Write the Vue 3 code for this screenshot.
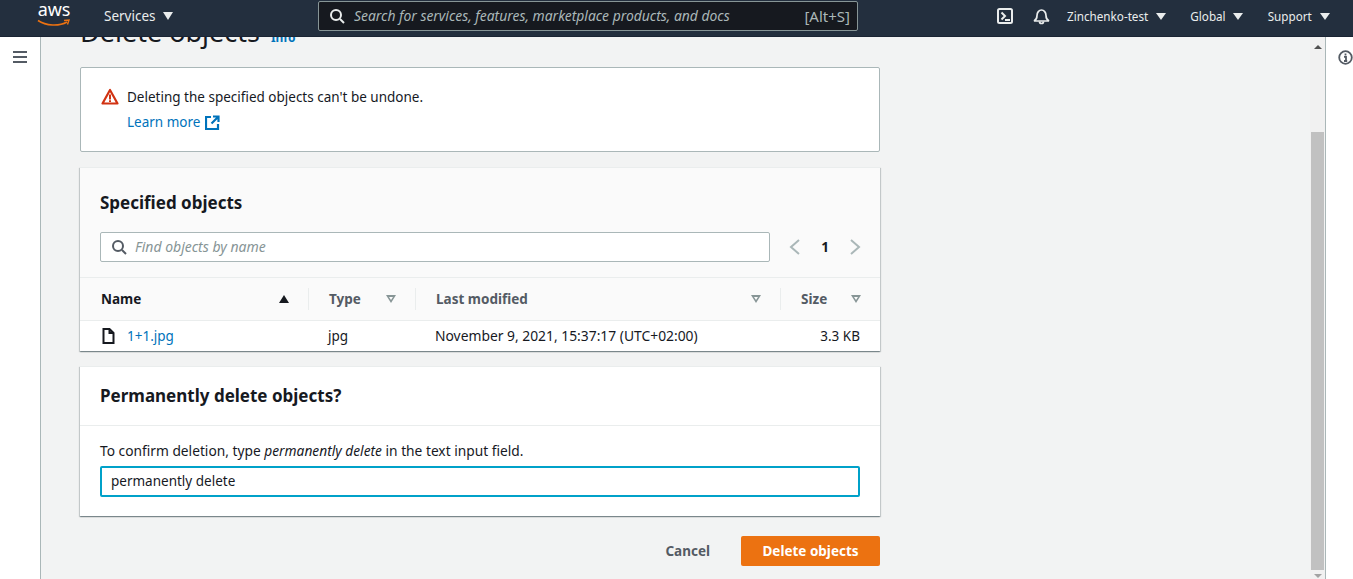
<script setup>
const columns = [
  { name: 'Name', cls: 'col-name', active: true },
  { name: 'Type', cls: 'col-type' },
  { name: 'Last modified', cls: 'col-date' },
  { name: 'Size', cls: 'col-size' },
]
</script>

<template>
  <div class="page">
    <header class="topnav">
      <div class="logo">
        <span class="logo-text">aws</span>
        <svg class="smile" width="34" height="8" viewBox="0 0 34 8">
          <path d="M1 1.5C9 7 22 7.5 30 3" fill="none" stroke="#ec7211" stroke-width="1.6" />
          <path d="M27 1.5l5-.5-1.5 4.5" fill="none" stroke="#ec7211" stroke-width="1.4" />
        </svg>
      </div>
      <div class="nav-item services">Services <span class="caret"></span></div>
      <div class="nav-search">
        <svg width="16" height="16" viewBox="0 0 16 16" fill="none" stroke="#eaeded" stroke-width="2">
          <circle cx="7" cy="7" r="5" />
          <path d="M11 11l4 4" />
        </svg>
        <span class="nav-search-text">Search for services, features, marketplace products, and docs</span>
        <span class="shortcut">[Alt+S]</span>
      </div>
      <div class="nav-right">
        <svg width="16" height="16" viewBox="0 0 16 16" fill="none" stroke="#eaeded" stroke-width="2">
          <rect x="1" y="1" width="14" height="14" rx="1.5" />
          <path d="M4.5 4.5L8 8l-3.5 3.5M8 12h5" />
        </svg>
        <svg class="bell" width="17" height="17" viewBox="0 0 17 17" fill="none" stroke="#eaeded" stroke-width="1.7">
          <path d="M1 13c2-1 3-2.500 3-5.500C4 4.500 6 2 8.500 2S13 4.500 13 7.500c0 3 1 4.500 3 5.500z" />
          <path d="M6.500 13.500a2 2 0 0 0 4 0" />
        </svg>
        <div class="nav-item user">Zinchenko-test <span class="caret small"></span></div>
        <div class="nav-item global">Global <span class="caret small"></span></div>
        <div class="nav-item support">Support <span class="caret small"></span></div>
      </div>
    </header>

    <div class="body">
      <aside class="side">
        <div class="burger"><i></i><i></i><i></i></div>
      </aside>

      <main class="main">
        <div class="content">
          <div class="title-row">
            <h1>Delete objects</h1>
            <a class="info">Info</a>
          </div>

          <section class="card alert">
            <svg class="warn" width="18" height="17" viewBox="0 0 18 17" fill="none">
              <path d="M9 2L1.500 15.500h15z" stroke="#d13212" stroke-width="2.200" stroke-linejoin="round" />
              <path d="M9 6.500v5M9 12.300v1.700" stroke="#d13212" stroke-width="2" />
            </svg>
            <div>
              <p class="alert-text">Deleting the specified objects can't be undone.</p>
              <a class="learn">
                Learn more
                <svg width="15" height="15" viewBox="0 0 15 15" fill="none" stroke="#0073bb" stroke-width="2.200">
                  <path d="M6 2H1v12h12V9" />
                  <path d="M8 1.500h5.500V7M13.500 1.500L6.500 8.500" />
                </svg>
              </a>
            </div>
          </section>

          <section class="card objects">
            <div class="objects-head">
              <h2>Specified objects</h2>
              <div class="filter-row">
                <div class="filter">
                  <svg width="16" height="16" viewBox="0 0 16 16" fill="none" stroke="#545b64" stroke-width="2">
                    <circle cx="7" cy="7" r="5" />
                    <path d="M11 11l4 4" />
                  </svg>
                  <span>Find objects by name</span>
                </div>
                <div class="pager">
                  <svg width="12" height="16" viewBox="0 0 12 16" fill="none" stroke="#aab7b8" stroke-width="2"><path d="M10 1L2 8l8 7" /></svg>
                  <b>1</b>
                  <svg width="12" height="16" viewBox="0 0 12 16" fill="none" stroke="#aab7b8" stroke-width="2"><path d="M2 1l8 7-8 7" /></svg>
                </div>
              </div>
            </div>
            <div class="thead">
              <div v-for="col in columns" :key="col.name" class="th" :class="[col.cls, { active: col.active }]">
                <span>{{ col.name }}</span>
                <span class="sort" :class="{ up: col.active }"></span>
              </div>
            </div>
            <div class="row">
              <div class="td col-name">
                <svg width="13" height="16" viewBox="0 0 13 16" fill="none" stroke="#16191f" stroke-width="2">
                  <path d="M1.500 1h6l4 4v10h-10zM7.500 1v4h4" />
                </svg>
                <a>1+1.jpg</a>
              </div>
              <div class="td col-type">jpg</div>
              <div class="td col-date">November 9, 2021, 15:37:17 (UTC+02:00)</div>
              <div class="td col-size">3.3 KB</div>
            </div>
          </section>

          <section class="card confirm">
            <h2 class="confirm-title">Permanently delete objects?</h2>
            <div class="confirm-body">
              <p>To confirm deletion, type <em>permanently delete</em> in the text input field.</p>
              <div class="confirm-input">permanently delete</div>
            </div>
          </section>

          <div class="actions">
            <button class="cancel">Cancel</button>
            <button class="danger">Delete objects</button>
          </div>
        </div>
      </main>

      <div class="scrollbar">
        <span class="arrow-up"></span>
        <div class="thumb"></div>
        <span class="arrow-down"></span>
      </div>

      <aside class="tools">
        <svg width="15" height="15" viewBox="0 0 15 15" fill="none">
          <circle cx="7.500" cy="7.500" r="6.300" stroke="#545b64" stroke-width="1.800" />
          <path d="M7.500 3.500v2M6 6.800h2v4M6 11h3.200" stroke="#545b64" stroke-width="1.800" />
        </svg>
      </aside>
    </div>
  </div>
</template>

<style>
html, body {
  margin: 0;
  overflow: hidden;
}
</style>

<style scoped>
.page {
  height: 100vh;
  display: flex;
  flex-direction: column;
  font-family: "Noto Sans", "Liberation Sans", sans-serif;
  font-size: 13.5px;
  color: #16191f;
  background: #fff;
}
.topnav {
  height: 37px;
  flex: none;
  box-sizing: border-box;
  display: flex;
  align-items: center;
  padding-bottom: 4px;
  background: #232f3e;
  border-bottom: 1px solid #1a2433;
  color: #eaeded;
}
.logo {
  width: 34px;
  margin-left: 37px;
  height: 28px;
  display: flex;
  flex-direction: column;
  align-items: center;
}
.logo-text {
  color: #fff;
  font-size: 18px;
  line-height: 15px;
  letter-spacing: -0.2px;
}
.smile {
  display: block;
  margin-top: 2px;
}
.nav-item {
  display: flex;
  align-items: center;
  gap: 8px;
  white-space: nowrap;
}
.services {
  margin-left: 33px;
  width: 72px;
  gap: 7px;
}
.caret {
  width: 0;
  height: 0;
  border-left: 5.500px solid transparent;
  border-right: 5.500px solid transparent;
  border-top: 8px solid #eaeded;
}
.caret.small {
  border-left-width: 5px;
  border-right-width: 5px;
  border-top-width: 7px;
}
.nav-search {
  width: 540px;
  height: 30px;
  flex: none;
  box-sizing: border-box;
  margin-left: 142px;
  padding: 0 7px 1px 10px;
  display: flex;
  align-items: center;
  gap: 9px;
  background: #16191f;
  border: 1px solid #879596;
  border-radius: 2px;
}
.nav-search-text {
  flex: 1;
  font-size: 13.9px;
  font-style: italic;
  color: #aab7b8;
  white-space: nowrap;
}
.shortcut {
  color: #aab7b8;
  font-size: 15px;
}
.nav-right {
  flex: 1;
  display: flex;
  align-items: center;
  padding-left: 139px;
  font-size: 11.7px;
}
.bell {
  margin-left: 20px;
}
.user {
  margin-left: 17px;
}
.global {
  margin-left: 24px;
  gap: 7px;
}
.support {
  margin-left: 25px;
}

.body {
  flex: 1;
  min-height: 0;
  display: flex;
}
.side {
  width: 40px;
  flex: none;
  border-right: 1px solid #aab7b8;
  padding-top: 14px;
}
.burger {
  margin-left: 13px;
  width: 14px;
  display: flex;
  flex-direction: column;
  gap: 3px;
}
.burger i {
  display: block;
  height: 2px;
  background: #545b64;
}
.main {
  flex: 1;
  min-width: 0;
  background: #f2f3f3;
  display: flex;
  flex-direction: column;
  justify-content: flex-end;
  overflow: hidden;
}
.content {
  width: 800px;
  margin-left: 39px;
  padding-bottom: 13px;
  flex: none;
}
.title-row {
  display: flex;
  align-items: baseline;
  gap: 11px;
  margin-bottom: 17px;
}
h1 {
  margin: 0;
  font-size: 27px;
  font-weight: 400;
  line-height: 36px;
}
.info {
  color: #0073bb;
  font-size: 12px;
  font-weight: 700;
}
.card {
  background: #fff;
  box-shadow: 0 1px 1px 0 rgba(0, 28, 36, 0.3), 1px 1px 1px 0 rgba(0, 28, 36, 0.15), -1px 1px 1px 0 rgba(0, 28, 36, 0.15);
  border-top: 1px solid #eaeded;
}
.alert {
  height: 85px;
  box-sizing: border-box;
  display: flex;
  gap: 8px;
  padding: 20px 20px 0;
  border: 1px solid #aab7b8;
  border-radius: 2px;
  box-shadow: none;
  margin-bottom: 15px;
}
.warn {
  flex: none;
}
.alert-text {
  margin: 0 0 4px;
  line-height: 19px;
}
.learn {
  color: #0073bb;
  display: flex;
  align-items: center;
  gap: 5px;
  line-height: 22px;
}
.objects {
  margin-bottom: 15px;
}
.objects-head {
  padding: 24px 20px 15px;
  background: #fafafa;
  border-bottom: 1px solid #eaeded;
}
h2 {
  margin: 0;
  font-size: 17px;
  font-weight: 700;
  line-height: 22px;
}
.filter-row {
  margin-top: 18px;
  display: flex;
  align-items: center;
}
.filter {
  width: 670px;
  height: 30px;
  flex: none;
  box-sizing: border-box;
  display: flex;
  align-items: center;
  gap: 8px;
  padding: 0 10px 1px;
  background: #fff;
  border: 1px solid #aab7b8;
  border-radius: 2px;
  color: #879596;
  font-size: 14px;
  font-style: italic;
}
.pager {
  flex: 1;
  display: flex;
  align-items: center;
  justify-content: space-between;
  padding-left: 19px;
  margin-right: -1px;
}
.pager b {
  font-size: 13.5px;
}
.thead {
  display: flex;
  height: 42px;
  background: #fafafa;
  border-bottom: 1px solid #eaeded;
  align-items: center;
}
.th {
  position: relative;
  display: flex;
  align-items: center;
  justify-content: space-between;
  box-sizing: border-box;
  height: 100%;
  color: #545b64;
  font-weight: 700;
}
.th.active {
  color: #16191f;
}
.th:not(:first-child)::before {
  content: "";
  position: absolute;
  left: 0;
  top: 10px;
  bottom: 10px;
  width: 1px;
  background: #eaeded;
}
.sort {
  width: 0;
  height: 0;
  border-left: 5.500px solid transparent;
  border-right: 5.500px solid transparent;
  border-top: 8px solid #879596;
  position: relative;
}
.sort::after {
  content: "";
  position: absolute;
  left: -2.500px;
  top: -6.500px;
  border-left: 2.500px solid transparent;
  border-right: 2.500px solid transparent;
  border-top: 3px solid #fafafa;
}
.sort.up {
  border-top: 0;
  border-bottom: 8px solid #16191f;
}
.sort.up::after {
  display: none;
}
.col-name {
  width: 228px;
  padding: 0 19px 0 21px;
}
.col-type {
  width: 107px;
  padding: 0 19px 0 21px;
}
.col-date {
  width: 365px;
  padding: 0 19px 0 21px;
}
.col-size {
  width: 100px;
  padding: 0 19px 0 21px;
}
.row {
  display: flex;
  height: 30px;
  align-items: center;
}
.td {
  box-sizing: border-box;
}
.td.col-name {
  display: flex;
  align-items: center;
  gap: 12px;
  padding-left: 22px;
}
.td.col-name a {
  color: #0073bb;
}
.td.col-type,
.td.col-date {
  padding-left: 20px;
}
.td.col-date {
  font-size: 13.85px;
  white-space: nowrap;
  padding-bottom: 1px;
}
.td.col-size {
  text-align: right;
  padding-right: 20px;
}
.confirm {
  margin-bottom: 20px;
}
.confirm-title {
  padding: 18px 20px 18px;
  border-bottom: 1px solid #eaeded;
}
.confirm-body {
  padding: 16px 20px 19px;
}
.confirm-body p {
  margin: 0 0 6px;
  font-size: 13.75px;
  line-height: 18px;
}
.confirm-input {
  height: 31px;
  box-sizing: border-box;
  border: 2px solid #00a1c9;
  border-radius: 2px;
  padding: 0 9px 1px;
  display: flex;
  align-items: center;
}
.actions {
  display: flex;
  justify-content: flex-end;
  align-items: center;
  gap: 31px;
}
button {
  font: inherit;
  font-weight: 700;
  border: 0;
  background: none;
  padding: 0;
}
.cancel {
  color: #545b64;
}
.danger {
  width: 139px;
  height: 30px;
  background: #ec7211;
  color: #fff;
  border-radius: 2px;
}
.scrollbar {
  width: 15px;
  flex: none;
  background: #f1f1f1;
  position: relative;
  display: flex;
  flex-direction: column;
  align-items: center;
  border-right: 1px solid #aab7b8;
}
.thumb {
  position: absolute;
  top: 95px;
  bottom: 9px;
  left: 1px;
  right: 1px;
  background: #c1c1c1;
}
.arrow-up {
  margin-top: 8px;
  border-left: 4px solid transparent;
  border-right: 4px solid transparent;
  border-bottom: 4px solid #505050;
}
.arrow-down {
  position: absolute;
  bottom: 1px;
  border-left: 4px solid transparent;
  border-right: 4px solid transparent;
  border-top: 4px solid #a3a3a3;
}
.tools {
  width: 27px;
  flex: none;
  box-sizing: border-box;
  padding: 13px 0 0 12px;
}
</style>
